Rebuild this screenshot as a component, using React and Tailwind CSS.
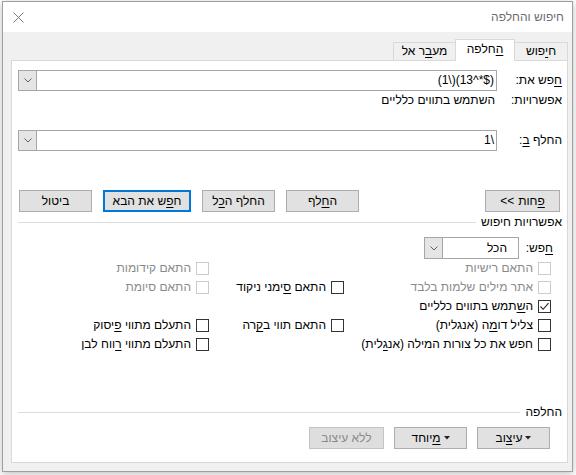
import React from 'react';

// Find & Replace dialog (Hebrew UI, RTL)

const U = ({ children }) => <span className="underline underline-offset-[2px]">{children}</span>;

function Chevron() {
  return (
    <svg width="8" height="5" viewBox="0 0 8 5">
      <polyline points="0.5,0.5 4,4 7.5,0.5" fill="none" stroke="#606060" strokeWidth="1" />
    </svg>
  );
}

function Combo({ children, className }) {
  return (
    <div className={`flex border border-[#a6a6a6] bg-white ${className}`}>
      <div className="flex-1 flex items-center pr-[2px] overflow-hidden whitespace-nowrap">{children}</div>
      <div className="w-[18px] bg-[#e5e5e5] border-r border-[#a6a6a6] flex items-center justify-center">
        <Chevron />
      </div>
    </div>
  );
}

function Btn({ children, className, focus, disabled }) {
  const look = focus
    ? 'border-2 border-[#0078d7] bg-[#e1e1e1] text-black'
    : disabled
    ? 'border border-[#c4c4c4] bg-[#dedede] text-[#8a8a8a]'
    : 'border border-[#adadad] bg-[#e1e1e1] text-black';
  return (
    <div className={`h-[22px] flex items-center justify-center ${look} ${className}`}>{children}</div>
  );
}

function Caret() {
  return (
    <svg width="6" height="4" viewBox="0 0 6 4">
      <polygon points="0,0 6,0 3,3.5" fill="#222222" />
    </svg>
  );
}

function Check({ children, checked, disabled }) {
  return (
    <div className="flex items-center gap-[5px]">
      <span
        className={`w-[13px] h-[13px] border bg-white flex items-center justify-center ${
          disabled ? 'border-[#cccccc]' : 'border-[#333333]'
        }`}
      >
        {checked && (
          <svg width="11" height="11" viewBox="0 0 11 11">
            <polyline points="1.5,5.5 4.2,8.3 9.5,2.2" fill="none" stroke="#222222" strokeWidth="1.1" />
          </svg>
        )}
      </span>
      <span className={disabled ? 'text-[#8a8a8a]' : 'text-black'}>{children}</span>
    </div>
  );
}

function Section({ title }) {
  return (
    <div className="flex items-center h-[14px] pr-[5px] pl-[6px]">
      <span className="whitespace-nowrap">{title}</span>
      <div className="flex-1 h-px bg-[#dcdcdc] mr-[5px]" />
    </div>
  );
}

export default function App() {
  return (
    <div className="w-[576px] h-[475px] bg-white overflow-hidden font-['Liberation_Sans','DejaVu_Sans',sans-serif] text-[12px] leading-[15px] text-black">
      <div
        dir="rtl"
        className="ml-[2px] mt-[1px] w-[571px] h-[471px] border border-[#9f9f9f] bg-[#f0f0f0] flex flex-col shadow-[0_2px_8px_rgba(0,0,0,0.25)]"
      >
        {/* Title bar */}
        <div className="h-[30px] bg-white flex items-center justify-between pr-[8px] pl-[10px]">
          <span className="text-[#6d6d6d] mt-[1px]">חיפוש והחלפה</span>
          <svg width="11" height="11" viewBox="0 0 11 11">
            <path d="M0.5 0.5 L10.5 10.5 M10.5 0.5 L0.5 10.5" stroke="#7a7a7a" strokeWidth="1" />
          </svg>
        </div>

        {/* Body */}
        <div className="flex-1 pt-[7px] pl-[8px] pr-[4px]">
          {/* Tabs */}
          <div className="h-[21px] flex items-end">
            <div className="h-[18px] w-[53px] border-t border-r border-[#d9d9d9] flex items-center justify-center">
              ח<U>י</U>פוש
            </div>
            <div className="h-[22px] w-[60px] -mb-px relative z-10 bg-white border-t border-r border-l border-[#d9d9d9] flex items-center justify-center pb-[2px]">
              <U>ה</U>חלפה
            </div>
            <div className="h-[18px] w-[62px] border-t border-l border-[#d9d9d9] flex items-center justify-center">
              מע<U>ב</U>ר אל
            </div>
          </div>

          {/* Tab panel */}
          <div className="h-[403px] bg-white border border-[#d9d9d9] flex flex-col">
            {/* Find what */}
            <div className="mt-[9px] flex items-center pr-[5px] pl-[6px]">
              <div className="w-[65px]">
                <U>ח</U>פש את:
              </div>
              <Combo className="flex-1 h-[21px]">
                <span dir="ltr">{'(1\\)(13^*$)'}</span>
              </Combo>
            </div>

            {/* Options */}
            <div className="mt-[2px] h-[15px] flex items-center pr-[5px]">
              <div className="w-[65px]">אפשרויות:</div>
              <div className="pr-[2px]">השתמש בתווים כלליים</div>
            </div>

            {/* Replace with */}
            <div className="mt-[22px] flex items-center pr-[5px] pl-[6px]">
              <div className="w-[65px]">
                החלף <U>ב</U>:
              </div>
              <Combo className="flex-1 h-[21px]">
                <span dir="ltr">{'1\\'}</span>
              </Combo>
            </div>

            {/* Buttons */}
            <div className="mt-[39px] flex items-center justify-between pr-[7px] pl-[7px]">
              <Btn className="w-[75px] gap-[4px]">
                <span>
                  <U>פ</U>חות
                </span>
                <span dir="ltr">{'<<'}</span>
              </Btn>
              <div className="flex items-center gap-[11px]">
                <Btn className="w-[73px]">
                  ה<U>ח</U>לף
                </Btn>
                <Btn className="w-[73px]">
                  החלף ה<U>כ</U>ל
                </Btn>
                <Btn className="w-[88px]" focus>
                  ח<U>פ</U>ש את הבא
                </Btn>
                <Btn className="w-[73px]">ביטול</Btn>
              </div>
            </div>

            {/* Search options */}
            <div className="mt-[3px]">
              <Section title="אפשרויות חיפוש" />
            </div>

            <div className="mt-[8px] flex items-center pr-[14px]">
              <div className="w-[34px]">
                <U>ח</U>פש:
              </div>
              <Combo className="w-[95px] h-[22px]">
                <span className="pr-[9px]">הכל</span>
              </Combo>
            </div>

            <div className="pr-[16px] flex flex-col">
              <div className="h-[19px] flex items-center">
                <div className="w-[207px]">
                  <Check disabled>התאם רישיות</Check>
                </div>
                <div className="w-[135px]" />
                <div>
                  <Check disabled>התאם קידומות</Check>
                </div>
              </div>
              <div className="h-[19px] flex items-center">
                <div className="w-[207px]">
                  <Check disabled>אתר מילים שלמות בלבד</Check>
                </div>
                <div className="w-[135px]">
                  <Check>
                    התאם <U>ס</U>ימני ניקוד
                  </Check>
                </div>
                <div>
                  <Check disabled>התאם סיומת</Check>
                </div>
              </div>
              <div className="h-[19px] flex items-center">
                <div className="w-[207px]">
                  <Check checked>
                    ה<U>ש</U>תמש בתווים כלליים
                  </Check>
                </div>
              </div>
              <div className="h-[19px] flex items-center">
                <div className="w-[207px]">
                  <Check>
                    צליל דו<U>מ</U>ה (אנגלית)
                  </Check>
                </div>
                <div className="w-[135px]">
                  <Check>
                    התאם תווי ב<U>ק</U>רה
                  </Check>
                </div>
                <div>
                  <Check>
                    התעלם מתווי <U>פ</U>יסוק
                  </Check>
                </div>
              </div>
              <div className="h-[19px] flex items-center">
                <div className="w-[342px]">
                  <Check>
                    חפש את כל צורות המילה (אנ<U>ג</U>לית)
                  </Check>
                </div>
                <div>
                  <Check>
                    התעלם מתווי <U>ר</U>ווח לבן
                  </Check>
                </div>
              </div>
            </div>

            {/* Replace section */}
            <div className="mt-[51px]">
              <Section title="החלפה" />
            </div>
            <div className="mt-[8px] flex items-center gap-[10px] pr-[17px]">
              <Btn className="w-[73px] gap-[3px]">
                <Caret />
                <span>
                  עי<U>צ</U>וב
                </span>
              </Btn>
              <Btn className="w-[73px] gap-[3px]">
                <Caret />
                <span>
                  <U>מ</U>יוחד
                </span>
              </Btn>
              <Btn className="w-[75px]" disabled>
                ללא עיצוב
              </Btn>
            </div>
          </div>
        </div>
      </div>
    </div>
  );
}
